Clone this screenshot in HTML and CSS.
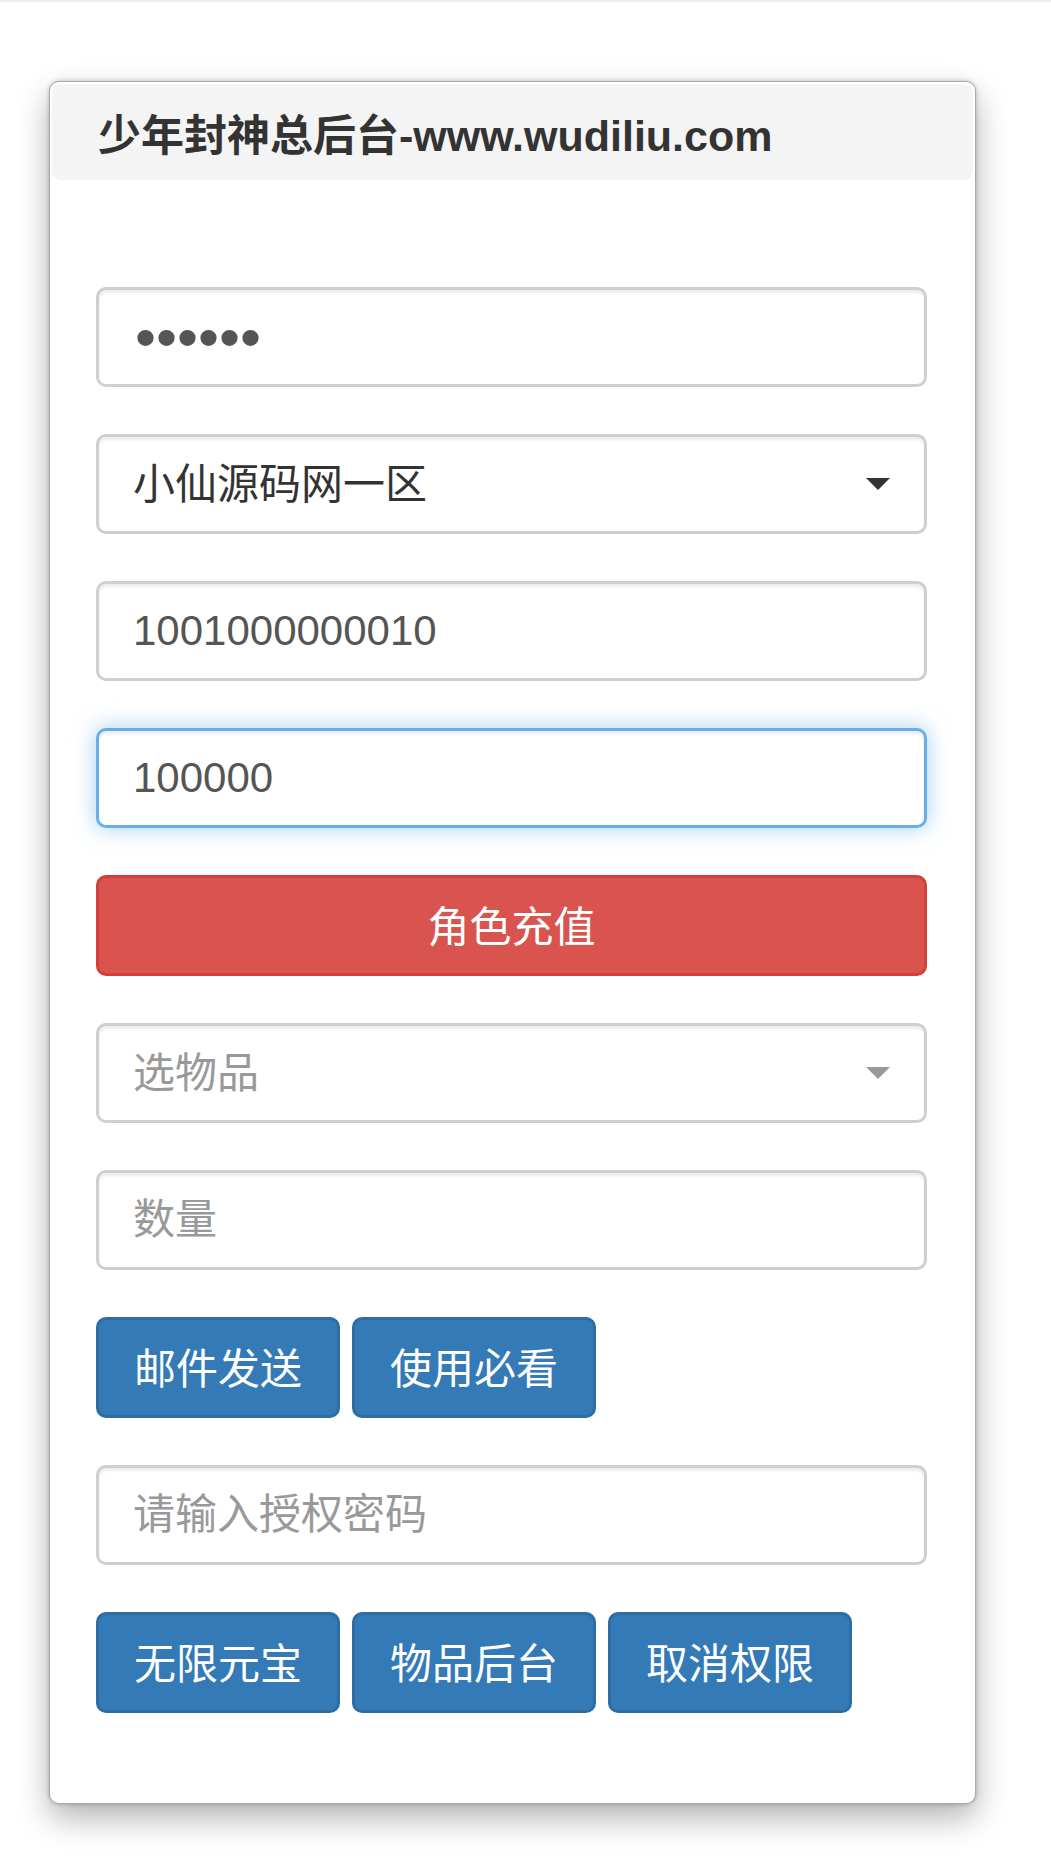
FILE: index.html
```html
<!DOCTYPE html>
<html lang="zh-CN">
<head>
    <meta charset="UTF-8">
    <title>少年封神总后台</title>
    <link rel="stylesheet" href="styles.css">
</head>
<body>
    <div class="panel">
        <div class="panel-heading">少年封神总后台-www.wudiliu.com</div>
        <div class="panel-body">
            <input class="form-control pass" type="password" value="123456">
            <div class="select-wrap">
                <select class="form-control">
                    <option>小仙源码网一区</option>
                </select>
            </div>
            <input class="form-control" type="text" value="1001000000010">
            <input class="form-control focus" type="text" value="100000">
            <button class="btn danger">角色充值</button>
            <div class="select-wrap muted">
                <select class="form-control empty">
                    <option>选物品</option>
                </select>
            </div>
            <input class="form-control" type="text" placeholder="数量">
            <div class="btn-row">
                <button class="btn primary">邮件发送</button>
                <button class="btn primary">使用必看</button>
            </div>
            <input class="form-control" type="password" placeholder="请输入授权密码">
            <div class="btn-row">
                <button class="btn primary">无限元宝</button>
                <button class="btn primary">物品后台</button>
                <button class="btn primary">取消权限</button>
            </div>
        </div>
    </div>
</body>
</html>
```

FILE: styles.css
```css
body {
    margin: 0;
    border-top: 2px solid #efefef;
    font-family: "Liberation Sans", "Noto Sans CJK SC", sans-serif;
    background: #fff;
}
.panel {
    width: 925px;
    margin: 79px 0 60px 49px;
    border: 1px solid #a9a9a9;
    border-radius: 10px;
    background: #fff;
    box-shadow: 0 0 4px rgba(0, 0, 0, .25), 0 14px 32px rgba(0, 0, 0, .3);
}
.panel-heading {
    height: 96px;
    margin: 2px;
    padding-left: 46px;
    display: flex;
    align-items: center;
    background: #f4f4f4;
    border-radius: 9px;
    color: #333;
    font-size: 43px;
    font-weight: 600;
}
.panel-body {
    display: flex;
    flex-direction: column;
    gap: 47px;
    padding: 105px 48px 90px 46px;
}
.form-control {
    box-sizing: border-box;
    width: 100%;
    height: 100px;
    margin: 0;
    padding: 0 34px;
    border: 3px solid #cfcfcf;
    border-radius: 10px;
    background: #fff;
    box-shadow: inset 0 3px 3px rgba(0, 0, 0, .075);
    color: #555;
    font-family: inherit;
    font-size: 42px;
    outline: 0;
}
.form-control::placeholder {
    color: #999;
}
.form-control.pass {
    padding-left: 36px;
    font-size: 60px;
}
.form-control.focus {
    border-color: #66afe9;
    box-shadow: inset 0 3px 3px rgba(0, 0, 0, .075), 0 0 22px rgba(102, 175, 233, .6);
}
.select-wrap {
    position: relative;
}
.select-wrap select {
    appearance: none;
    -webkit-appearance: none;
    padding-left: 34px;
    color: #333;
}
.select-wrap select.empty {
    color: #999;
}
.select-wrap::after {
    content: "";
    position: absolute;
    right: 37px;
    top: 44px;
    border-left: 12px solid transparent;
    border-right: 12px solid transparent;
    border-top: 12px solid #333;
    pointer-events: none;
}
.select-wrap.muted::after {
    border-top-color: #999;
}
.btn {
    box-sizing: border-box;
    height: 101px;
    margin: 0;
    padding: 0 0 5px;
    border: 3px solid transparent;
    border-radius: 10px;
    color: #fff;
    font-family: inherit;
    font-size: 42px;
    white-space: nowrap;
    cursor: pointer;
}
.btn.danger {
    width: 100%;
    background: #d9534f;
    border-color: #d43f3a;
}
.btn.primary {
    width: 244px;
    background: #337ab7;
    border-color: #2e6da4;
}
.btn-row {
    display: flex;
    gap: 12px;
}
```
